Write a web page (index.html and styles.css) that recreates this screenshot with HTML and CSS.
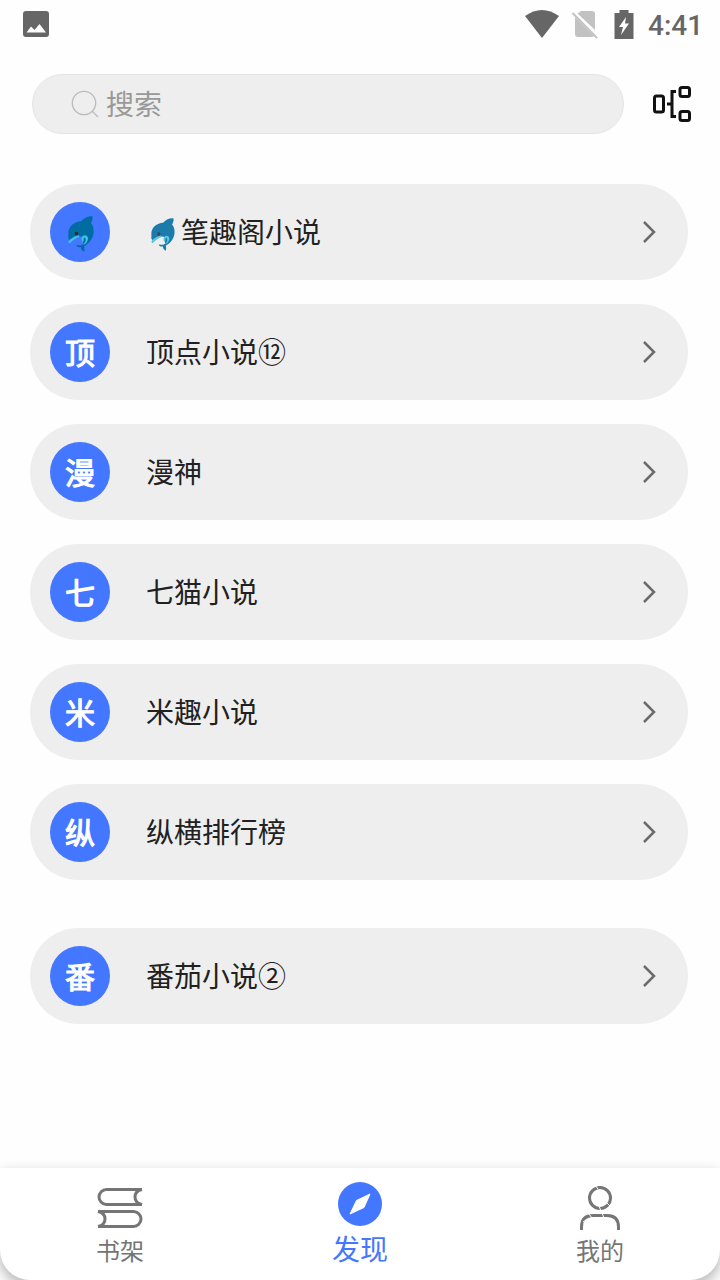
FILE: index.html
```html
<!DOCTYPE html>
<html lang="zh-CN">
<head>
  <meta charset="UTF-8">
  <title>发现</title>
  <link rel="stylesheet" href="styles.css">
</head>
<body>

  <svg class="defs" width="0" height="0">
    <symbol id="dolphin" viewBox="80 74 80 110">
      <path class="dolphin-body" d="M155 78C141 77 129 84 123 92C101 95 84 107 84 129L84 144L90 151L112 137L125 138L129 160C121 167 115 162 108 163C109 169 116 171 121 169C121 176 125 182 131 183C132 177 133 171 130 167C148 158 160 140 159 121C159 111 156 104 151 98C156 90 157 81 155 78Z"/>
      <path class="dolphin-belly" d="M84 153C91 143 103 136 115 134L117 139C106 143 97 150 88 159C86 158 85 156 84 153Z"/>
      <path class="dolphin-belly" d="M128 136C138 130 147 142 140 152C138 157 134 161 128 162C136 154 138 145 132 141C128 143 131 151 127 155C121 149 122 140 128 136Z"/>
      <circle class="dolphin-eye" cx="108" cy="129" r="5.5"/>
    </symbol>
    <symbol id="arrow" viewBox="0 0 16 24">
      <path d="M3 2L13 12L3 22" fill="none" stroke="#6b6b6b" stroke-width="2.5"/>
    </symbol>
  </svg>

  <header class="status-bar">
    <svg width="26" height="26" viewBox="0 0 26 26">
      <path fill="#666" fill-rule="evenodd" d="M3 0H23Q26 0 26 3V23Q26 26 23 26H3Q0 26 0 23V3Q0 0 3 0ZM3.5 21.5H23L16.5 13L11.5 19L8 15.5Z"/>
    </svg>
    <div class="status-right">
      <svg class="wifi" width="36" height="30" viewBox="0 0 36 30">
        <path fill="#666" d="M1 7Q18 -5 35 7L18 29Z"/>
      </svg>
      <svg class="sim" width="28" height="30" viewBox="0 0 28 30">
        <path fill="#c2c2c2" d="M10 2H21Q24 2 24 5V21L6.5 4.5ZM4 8L23 27Q22 28 21 28H7Q4 28 4 25Z"/>
        <path stroke="#c2c2c2" stroke-width="2" d="M1.5 4L26 29"/>
      </svg>
      <svg class="battery" width="20" height="30" viewBox="0 0 20 30">
        <path fill="#666" fill-rule="evenodd" d="M5.5 1H14.5V4H19.5V30H.5V4H5.5ZM12 8L5 18H9L7 26L15 14.5H11Z"/>
      </svg>
      <span class="clock">4:41</span>
    </div>
  </header>

  <div class="top">
    <div class="search">
      <svg width="30" height="30" viewBox="0 0 30 30" fill="none" stroke="#bbb" stroke-width="1.3">
        <circle cx="14" cy="14" r="11.7"/>
        <path d="M22 22L28 28"/>
      </svg>
      <span>搜索</span>
    </div>
    <svg width="40" height="40" viewBox="0 0 40 40" fill="none" stroke="#111" stroke-width="3">
      <rect x="2.500" y="12" width="9" height="16" rx="2"/>
      <rect x="28" y="3.500" width="9.500" height="9" rx="2"/>
      <rect x="28" y="27.500" width="9.500" height="9" rx="2"/>
      <path d="M24 7.500H20V32.500H24M15 20H20"/>
    </svg>
  </div>

  <main class="list">
    <div class="item">
      <div class="avatar"><svg class="dolphin-big"><use href="#dolphin"/></svg></div>
      <div class="name"><svg class="dolphin-small"><use href="#dolphin"/></svg>笔趣阁小说</div>
      <svg class="arrow"><use href="#arrow"/></svg>
    </div>
    <div class="item">
      <div class="avatar">顶</div>
      <div class="name">顶点小说⑫</div>
      <svg class="arrow"><use href="#arrow"/></svg>
    </div>
    <div class="item">
      <div class="avatar">漫</div>
      <div class="name">漫神</div>
      <svg class="arrow"><use href="#arrow"/></svg>
    </div>
    <div class="item">
      <div class="avatar">七</div>
      <div class="name">七猫小说</div>
      <svg class="arrow"><use href="#arrow"/></svg>
    </div>
    <div class="item">
      <div class="avatar">米</div>
      <div class="name">米趣小说</div>
      <svg class="arrow"><use href="#arrow"/></svg>
    </div>
    <div class="item">
      <div class="avatar">纵</div>
      <div class="name">纵横排行榜</div>
      <svg class="arrow"><use href="#arrow"/></svg>
    </div>
    <div class="item last">
      <div class="avatar">番</div>
      <div class="name">番茄小说②</div>
      <svg class="arrow"><use href="#arrow"/></svg>
    </div>
  </main>

  <nav class="tabs">
    <div class="tab">
      <svg width="48" height="44" viewBox="0 0 48 44" fill="none" stroke="#757575" stroke-width="3">
        <path d="M46 3.500H10.500A7.500 7.500 0 0 0 10.500 18.500H46M46 3.500Q39 5 39 11T46 18.500"/>
        <path d="M2 25.500H37.500A7.500 7.500 0 0 1 37.500 40.500H2M2 25.500Q9 27 9 33T2 40.500"/>
      </svg>
      <span class="shelf">书架</span>
    </div>
    <div class="tab active">
      <svg width="44" height="44" viewBox="0 0 44 44">
        <circle cx="22" cy="22" r="22" fill="#4477ff"/>
        <path d="M32 12L26 25.500L12 32L18.500 18.500Z" fill="#fff" stroke="#fff" stroke-linejoin="round"/>
      </svg>
      <span>发现</span>
    </div>
    <div class="tab mine">
      <svg width="44" height="46" viewBox="0 0 44 46" fill="none" stroke="#757575" stroke-width="3">
        <circle cx="22" cy="13" r="10.5"/>
        <path d="M3.500 45V42Q3.500 30.500 15 30.500H29Q40.500 30.500 40.500 42V45"/>
        <path d="M17 0L20 4M21 21L23 26M29 18L33 22M11 29L14 33M24 28L26 33M5 37L8 35" stroke="#fff" stroke-width="1"/>
      </svg>
      <span>我的</span>
    </div>
  </nav>

</body>
</html>
```
FILE: styles.css
```css
* {
  box-sizing: border-box;
}
body {
  margin: 0;
  height: 1280px;
  display: flex;
  flex-direction: column;
  overflow: hidden;
  background: #fefefe;
  color: #212121;
  font-family: "Noto Sans CJK SC", sans-serif;
}
svg {
  display: block;
  flex: none;
}
.defs {
  position: absolute;
}
.status-bar {
  height: 48px;
  padding: 0 18px 0 23px;
  display: flex;
  align-items: center;
  justify-content: space-between;
}
.status-right {
  display: flex;
  align-items: center;
}
.wifi {
  margin-right: 11px;
}
.sim {
  margin-right: 15px;
}
.battery {
  margin-right: 14px;
  margin-bottom: 1px;
}
.clock {
  width: 54px;
  color: #666;
  font: 500 28px/30px Roboto, sans-serif;
  white-space: nowrap;
  padding-top: 4px;
}
.top {
  display: flex;
  align-items: center;
  justify-content: space-between;
  margin-top: 26px;
  padding: 0 28px 0 32px;
}
.search {
  width: 592px;
  height: 60px;
  padding-left: 37px;
  display: flex;
  align-items: center;
  gap: 6px;
  background: #eee;
  border: 1px solid #e5e5e5;
  border-radius: 30px;
  color: #999;
  font-size: 28px;
  line-height: 40px;
}
.search span {
  padding-bottom: 2px;
}
.list {
  flex: 1;
  padding: 50px 32px 0 30px;
}
.item {
  height: 96px;
  margin-bottom: 24px;
  padding: 0 31px 0 20px;
  display: flex;
  align-items: center;
  background: #eee;
  border-radius: 48px;
}
.item.last {
  margin-top: 48px;
}
.avatar {
  width: 60px;
  height: 60px;
  margin-right: 36px;
  display: flex;
  align-items: center;
  justify-content: center;
  border-radius: 50%;
  background: #4477ff;
  color: #fff;
  font-size: 30px;
  line-height: 56px;
  padding-bottom: 3px;
  -webkit-text-stroke: 1.1px #fff;
}
.name {
  flex: 1;
  display: flex;
  align-items: center;
  padding-bottom: 2px;
  font-size: 28px;
  line-height: 40px;
}
.arrow {
  width: 16px;
  height: 24px;
}
.dolphin-big {
  width: 27px;
  height: 37px;
  margin-top: 6px;
}
.dolphin-small {
  width: 25px;
  height: 34px;
  margin: 5px 6px 0 4px;
  opacity: .88;
}
.dolphin-body {
  fill: #006ca2;
}
.dolphin-belly {
  fill: #40c0e7;
}
.dolphin-eye {
  fill: #2f2f2f;
}
.tabs {
  height: 112px;
  display: flex;
  background: #fff;
  border-radius: 0 0 30px 30px;
  box-shadow: 0 6px 14px rgba(0, 0, 0, .3);
}
.tab {
  flex: 1;
  padding-top: 18px;
  display: flex;
  flex-direction: column;
  align-items: center;
  color: #757575;
  font-size: 24px;
  line-height: 38px;
}
.shelf {
  padding-top: 1px;
}
.tab.mine {
  padding-top: 17px;
}
.tab.active {
  padding-top: 14px;
  color: #4477ff;
  font-size: 28px;
  line-height: 44px;
}
```
